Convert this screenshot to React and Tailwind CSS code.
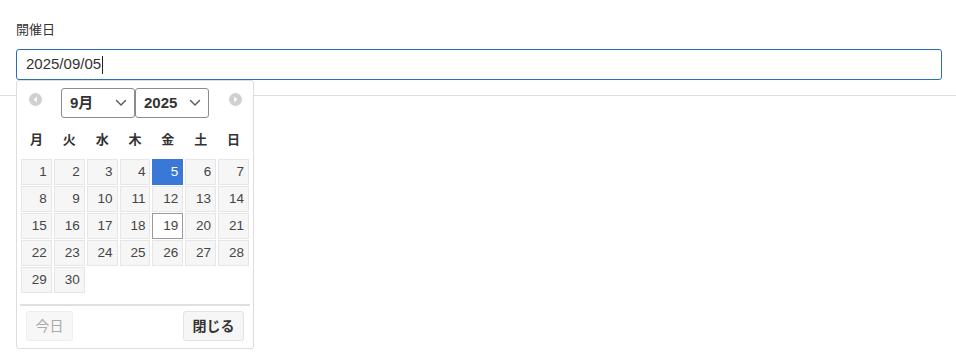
import React from "react";

const FONT = { fontFamily: '"Liberation Sans", Arial, "Noto Sans CJK JP", sans-serif' };

function Chevron() {
  return (
    <svg width="12" height="8" viewBox="0 0 12 8" className="shrink-0">
      <polyline points="1.5,1.5 6,6 10.5,1.5" fill="none" stroke="#555" strokeWidth="1.4" strokeLinecap="round" strokeLinejoin="round" />
    </svg>
  );
}

function NavIcon({ dir }) {
  return (
    <svg width="13" height="13" viewBox="0 0 13 13" className="shrink-0">
      <circle cx="6.5" cy="6.5" r="6.5" fill="#d0d0d0" />
      {dir === "prev" ? (
        <polygon points="7.8,3.6 4.6,6.5 7.8,9.4" fill="#fff" />
      ) : (
        <polygon points="5.2,3.6 8.4,6.5 5.2,9.4" fill="#fff" />
      )}
    </svg>
  );
}

export default function App() {
  const weekdays = ["月", "火", "水", "木", "金", "土", "日"];
  const days = Array.from({ length: 30 }, (_, i) => i + 1);
  return (
    <div className="relative min-h-[361px] bg-white text-[#333]" style={FONT}>
      <div className="pl-4 pr-[14px] pt-[22px] pb-[15px] border-b border-[#dddddd]">
        <div className="text-[13px] leading-[16px] text-[#333]">開催日</div>
        <div className="mt-[11px] h-[31px] rounded-[3px] border border-[#2a6db8] flex items-center pl-[9px] text-[15px] text-[#333]">
          <span>2025/09/05</span>
          <span className="inline-block w-px h-[18px] bg-[#222] ml-px" />
        </div>
      </div>

      <div className="absolute left-4 top-[80px] w-[238px] h-[269px] bg-white border border-[#dddddd] rounded-[3px] px-[3px]">
        <div className="relative h-[40px] flex items-center justify-center">
          <div className="absolute left-[9px] top-[12px]"><NavIcon dir="prev" /></div>
          <div className="absolute right-[8px] top-[12px]"><NavIcon dir="next" /></div>
          <div className="flex items-center mt-[4px]">
            <div className="w-[74px] h-[30px] border border-[#8c8c8c] rounded-[3px] flex items-center justify-between pl-[8px] pr-[7px] font-bold text-[15px] text-[#333]">
              <span>9月</span>
              <Chevron />
            </div>
            <div className="w-[74px] h-[30px] border border-[#8c8c8c] rounded-[3px] flex items-center justify-between pl-[8px] pr-[7px] font-bold text-[15px] text-[#333]">
              <span>2025</span>
              <Chevron />
            </div>
          </div>
        </div>

        <div className="grid grid-cols-7 w-[228px] ml-px gap-x-[2px] h-[38px] items-center">
          {weekdays.map((w) => (
            <div key={w} className="text-center font-bold text-[13px] text-[#333]">{w}</div>
          ))}
        </div>

        <div className="grid grid-cols-7 w-[228px] ml-px gap-x-[2px] gap-y-[1px]">
          {days.map((d) => {
            const selected = d === 5;
            const today = d === 19;
            let cls = "h-[26px] flex items-center justify-end pr-[4px] text-[13.5px] border ";
            if (selected) cls += "bg-[#3a78d8] border-[#3a78d8] text-white";
            else if (today) cls += "bg-white border-[#9a9a9a] text-[#454545]";
            else cls += "bg-[#f6f6f6] border-[#e6e6e6] text-[#454545]";
            return (
              <div key={d} className={cls}>{d}</div>
            );
          })}
        </div>

        <div className="mt-[11px] border-t-2 border-[#e0e0e0] flex justify-between px-[6px] pt-[5px]">
          <div className="w-[47px] h-[30px] bg-[#f7f7f7] border border-[#eeeeee] rounded-[3px] flex items-center justify-center text-[14px] text-[#aaaaaa]">今日</div>
          <div className="w-[61px] h-[30px] bg-[#f6f6f6] border border-[#e3e3e3] rounded-[3px] flex items-center justify-center text-[14px] font-bold text-[#333]">閉じる</div>
        </div>
      </div>
    </div>
  );
}
